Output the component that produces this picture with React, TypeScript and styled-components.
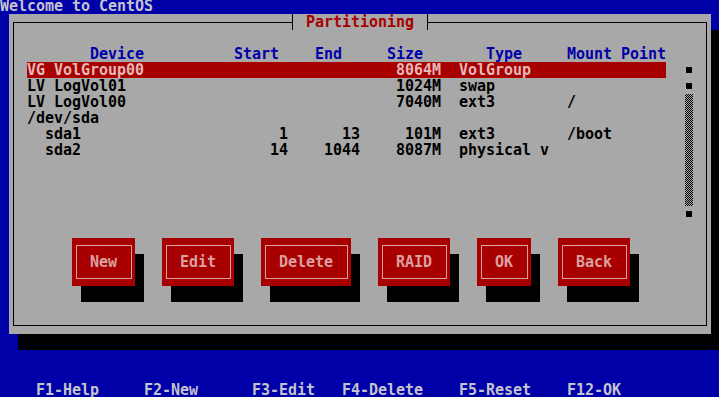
import React from "react";
import styled, { createGlobalStyle } from "styled-components";

/* Terminal grid: 80 x 25 cells of 9 x 16 px */
const CW = 9;
const RH = 16;

const colors = {
  blue: "#0000a8",
  gray: "#a8a8a8",
  red: "#a80000",
  black: "#000000",
  dim: "#c4c4d0",
  hilite: "#e4b8b8",
  buttonInk: "#dca0a0",
};

const GlobalStyle = createGlobalStyle`
  html, body {
    margin: 0;
    padding: 0;
    background: ${colors.blue};
  }
`;

/* Styled Components */
const Viewport = styled.div`
  width: 719px;
  height: 397px;
  overflow: hidden;
  background: ${colors.blue};
  font-family: "DejaVu Sans Mono", "Liberation Mono", monospace;
  font-size: 15px;
  font-weight: 700;
  letter-spacing: -0.03px;
`;

const Screen = styled.div`
  width: ${80 * CW}px;
  height: ${25 * RH}px;
  margin-top: -2px;
  display: flex;
  flex-direction: column;
`;

const StatusLine = styled.div`
  height: ${RH}px;
  line-height: ${RH}px;
  white-space: pre;
  color: ${colors.dim};
`;

const HelpLine = styled(StatusLine)`
  margin-top: auto;
`;

const Window = styled.div`
  position: relative;
  margin-left: ${CW}px;
  width: ${78 * CW}px;
  height: ${20 * RH}px;
  background: ${colors.gray};
  box-shadow: ${CW}px ${RH}px 0 ${colors.black};
`;

const Title = styled.div`
  position: absolute;
  top: 0;
  left: 283px;
  width: 136px;
  height: ${RH}px;
  box-sizing: border-box;
  padding-left: 13px;
  line-height: ${RH}px;
  background: ${colors.gray};
  border-left: 1px solid ${colors.black};
  border-right: 1px solid ${colors.black};
  color: ${colors.red};
`;

const Frame = styled.div`
  margin: 8px 4px;
  height: ${20 * RH - 16}px;
  box-sizing: border-box;
  border: 1px solid ${colors.black};
  padding: 7px 4px;
  display: flex;
  flex-direction: column;
`;

const ColumnHeader = styled.div`
  margin-top: ${RH}px;
  padding-left: ${CW}px;
  height: ${RH}px;
  line-height: ${RH}px;
  white-space: pre;
  color: ${colors.blue};
`;

const ListBox = styled.div`
  display: flex;
  gap: ${2 * CW}px;
  padding-left: ${CW}px;
  height: ${10 * RH}px;
`;

const List = styled.div`
  width: ${71 * CW}px;
  display: flex;
  flex-direction: column;
`;

const Row = styled.div<{ $selected?: boolean }>`
  display: grid;
  grid-template-columns: ${[20, 9, 8, 9, 14, 11].map((n) => `${n * CW}px`).join(" ")};
  height: ${RH}px;
  line-height: ${RH}px;
  white-space: pre;
  background: ${(p) => (p.$selected ? colors.red : "transparent")};
  color: ${(p) => (p.$selected ? colors.hilite : colors.black)};
`;

const Cell = styled.span<{ $right?: boolean; $indent?: number }>`
  text-align: ${(p) => (p.$right ? "right" : "left")};
  padding-left: ${(p) => (p.$indent ?? 0) * CW}px;
`;

const ScrollBar = styled.div`
  width: ${CW}px;
  display: flex;
  flex-direction: column;
`;

const ScrollMark = styled.div`
  height: ${RH}px;
  box-sizing: border-box;
  padding: 5px 0 0 2px;

  &::before {
    content: "";
    display: block;
    width: 6px;
    height: 6px;
    background: ${colors.black};
  }
`;

const ScrollTrough = styled.div<{ $rows: number }>`
  height: ${(p) => p.$rows * RH}px;
  width: 8px;
  margin-left: 1px;
  background: repeating-conic-gradient(${colors.black} 0 25%, ${colors.gray} 0 50%) 0 0 / 2px 2px;
`;

const ButtonBar = styled.div`
  display: flex;
  gap: ${3 * CW}px;
  margin-top: ${RH}px;
  padding-left: ${6 * CW}px;
`;

const Button = styled.div`
  height: ${3 * RH}px;
  box-sizing: border-box;
  padding: 7px 3px 7px 4px;
  background: ${colors.red};
  box-shadow: ${CW}px ${RH}px 0 ${colors.black};
`;

const ButtonFace = styled.div`
  height: 100%;
  box-sizing: border-box;
  border: 1px solid ${colors.buttonInk};
  padding: 8px 14px 0 13px;
  line-height: ${RH}px;
  white-space: pre;
  color: ${colors.buttonInk};
`;

/* Data */
interface Partition {
  device: string;
  indent?: number;
  start?: string;
  end?: string;
  size?: string;
  type?: string;
  mount?: string;
  selected?: boolean;
}

const partitions: Partition[] = [
  { device: "VG VolGroup00", size: "8064M", type: "VolGroup", selected: true },
  { device: "LV LogVol01", size: "1024M", type: "swap" },
  { device: "LV LogVol00", size: "7040M", type: "ext3", mount: "/" },
  { device: "/dev/sda" },
  { device: "sda1", indent: 2, start: "1", end: "13", size: "101M", type: "ext3", mount: "/boot" },
  { device: "sda2", indent: 2, start: "14", end: "1044", size: "8087M", type: "physical v" },
];

const buttons = ["New", "Edit", "Delete", "RAID", "OK", "Back"];

const sp = (n: number) => " ".repeat(n);
const header = `${sp(7)}Device${sp(10)}Start${sp(4)}End${sp(5)}Size${sp(7)}Type${sp(5)}Mount Point`;
const help = `${sp(4)}F1-Help${sp(5)}F2-New${sp(6)}F3-Edit${sp(3)}F4-Delete${sp(4)}F5-Reset${sp(4)}F12-OK`;

/* Components */
const App: React.FC = () => (
  <>
    <GlobalStyle />
    <Viewport>
      <Screen>
        <StatusLine>Welcome to CentOS</StatusLine>
        <Window>
          <Frame>
            <ColumnHeader>{header}</ColumnHeader>
            <ListBox>
              <List>
                {partitions.map((p) => (
                  <Row key={p.device} $selected={p.selected}>
                    <Cell $indent={p.indent}>{p.device}</Cell>
                    <Cell $right>{p.start ?? ""}</Cell>
                    <Cell $right>{p.end ?? ""}</Cell>
                    <Cell $right>{p.size ?? ""}</Cell>
                    <Cell $indent={2}>{p.type ?? ""}</Cell>
                    <Cell>{p.mount ?? ""}</Cell>
                  </Row>
                ))}
              </List>
              <ScrollBar>
                <ScrollMark />
                <ScrollMark />
                <ScrollTrough $rows={7} />
                <ScrollMark />
              </ScrollBar>
            </ListBox>
            <ButtonBar>
              {buttons.map((b) => (
                <Button key={b}>
                  <ButtonFace>{b}</ButtonFace>
                </Button>
              ))}
            </ButtonBar>
          </Frame>
          <Title>Partitioning</Title>
        </Window>
        <HelpLine>{help}</HelpLine>
      </Screen>
    </Viewport>
  </>
);

export default App;
